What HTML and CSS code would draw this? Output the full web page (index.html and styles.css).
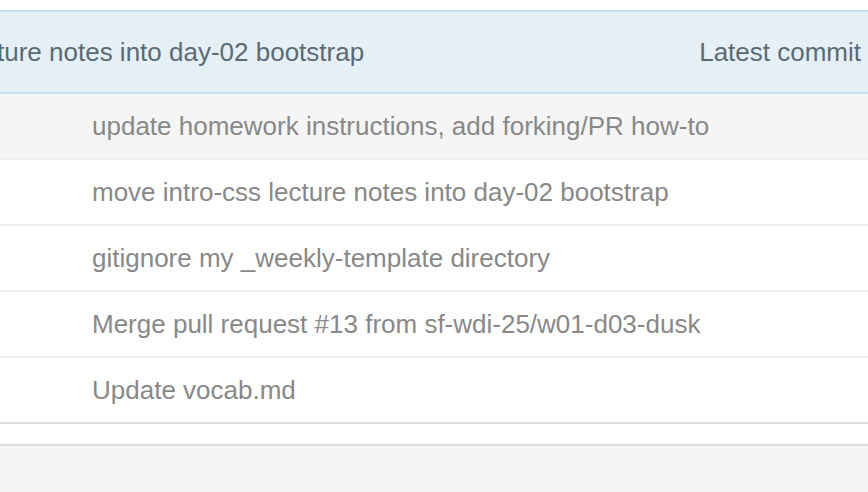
FILE: index.html
```html
<!DOCTYPE html>
<html>
<head>
<meta charset="utf-8">
<link rel="stylesheet" href="styles.css">
</head>
<body>
<div class="page">
  <div class="tease">
    <span class="tease-msg">ture notes into day-02 bootstrap</span>
    <span class="tease-meta">Latest commit</span>
  </div>
  <div class="files">
    <div class="row row-up"><span class="msg">update homework instructions, add forking/PR how-to</span></div>
    <div class="row"><span class="msg">move intro-css lecture notes into day-02 bootstrap</span></div>
    <div class="row"><span class="msg">gitignore my _weekly-template directory</span></div>
    <div class="row"><span class="msg">Merge pull request #13 from sf-wdi-25/w01-d03-dusk</span></div>
    <div class="row row-last"><span class="msg">Update vocab.md</span></div>
  </div>
  <div class="spacer"></div>
  <div class="footer"></div>
</div>
</body>
</html>
```

FILE: styles.css
```css
html, body {
  margin: 0;
  padding: 0;
  background: #ffffff;
}
body {
  font-family: "Liberation Sans", Arial, Helvetica, sans-serif;
  width: 868px;
  height: 492px;
  overflow: hidden;
}
.page {
  padding-top: 10px;
  display: flex;
  flex-direction: column;
  height: 482px;
}
.tease {
  height: 80px;
  background: #e5f0f6;
  border-top: 2px solid #c3dde9;
  border-bottom: 2px solid #c3dde9;
  display: flex;
  align-items: center;
  justify-content: space-between;
  color: #5b6a72;
  font-size: 26px;
  padding-right: 7px;
}
.tease-msg {
  margin-left: -3px;
}
.files {
  display: flex;
  flex-direction: column;
}
.row {
  height: 64px;
  border-bottom: 2px solid #eeeeee;
  display: flex;
  align-items: center;
  padding-left: 92px;
  color: #888888;
  font-size: 26px;
}
.row-up {
  background: #f5f5f5;
}
.row-last {
  border-bottom-color: #dddddd;
}
.spacer {
  height: 20px;
  border-bottom: 2px solid #dddddd;
}
.footer {
  flex: 1;
  background: #f4f4f4;
}
```
